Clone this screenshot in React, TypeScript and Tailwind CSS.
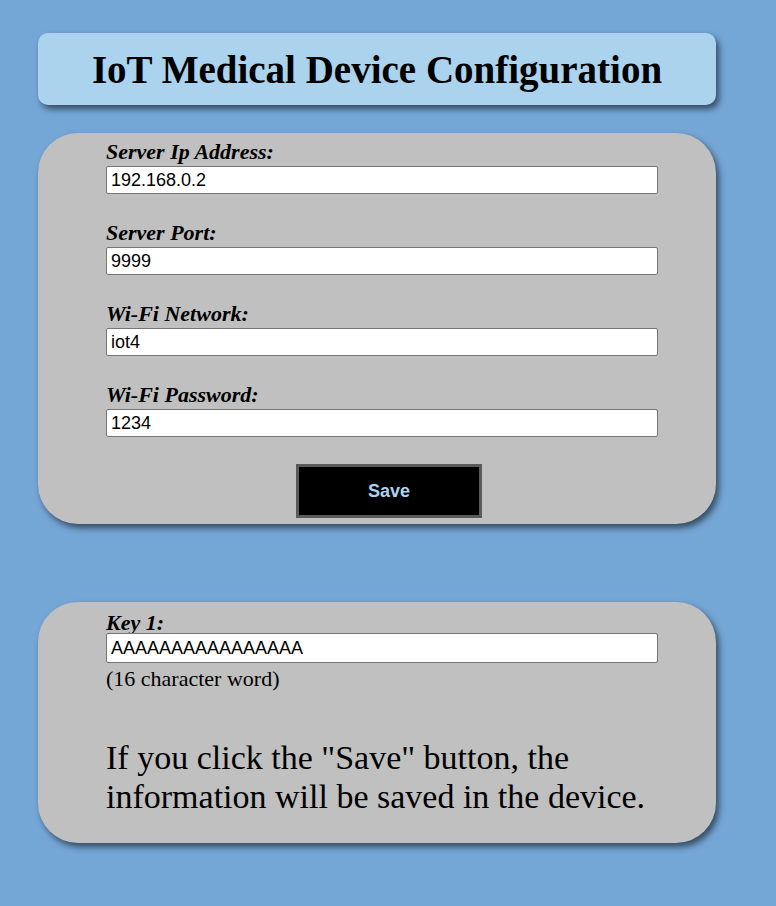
import { FC } from "react";

const fields = [
  { label: "Server Ip Address:", value: "192.168.0.2" },
  { label: "Server Port:", value: "9999" },
  { label: "Wi-Fi Network:", value: "iot4" },
  { label: "Wi-Fi Password:", value: "1234" },
];

const Field: FC<{ label: string; value: string; tall?: boolean }> = ({ label, value, tall }) => {
  return (
    <div className="flex flex-col">
      <label className={(tall ? "-mb-[2px] " : "mb-[2px] ") + "text-[22px] leading-[25px] font-bold italic"}>
        {label}
      </label>
      <input
        defaultValue={value}
        className={
          (tall ? "h-[30px] " : "h-[28px] ") +
          "w-[552px] bg-white border border-[#767676] rounded-[2px] px-[4px] text-[18px] font-[family-name:'Liberation_Sans',Arial,sans-serif] text-black outline-none"
        }
      />
    </div>
  );
};

const App: FC = () => {
  return (
    <main className="min-h-[906px] bg-[#74a6d6] pt-[33px] pb-[60px] font-[family-name:'Liberation_Serif','Times_New_Roman',serif] text-black">
      <div className="ml-[38px] w-[678px] flex flex-col">
        <header className="h-[72px] flex items-center justify-center rounded-[10px] bg-[#abd3ee] shadow-[3px_4px_6px_rgba(0,0,0,0.55)]">
          <h1 className="text-[39px] font-bold leading-none">IoT Medical Device Configuration</h1>
        </header>

        <section className="mt-[28px] rounded-[40px] bg-[#c0c0c0] shadow-[3px_4px_6px_rgba(0,0,0,0.55)] pt-[6px] pb-[6px] pl-[68px]">
          <div className="flex flex-col gap-[26px]">
            {fields.map((f) => (
              <Field key={f.label} label={f.label} value={f.value} />
            ))}
          </div>
          <div className="mt-[27px] ml-[190px]">
            <button className="w-[186px] h-[54px] bg-black border-[3px] border-[#5a5a5a] text-[#a9d4f0] text-[18px] font-bold font-[family-name:'Liberation_Sans',Arial,sans-serif]">
              Save
            </button>
          </div>
        </section>

        <section className="mt-[78px] h-[241px] rounded-[40px] bg-[#c0c0c0] shadow-[3px_4px_6px_rgba(0,0,0,0.55)] pt-[8px] pl-[68px]">
          <Field label="Key 1:" value="AAAAAAAAAAAAAAAA" tall />
          <p className="text-[22px] leading-[25px] mt-[3px]">(16 character word)</p>
          <p className="mt-[47px] text-[34px] leading-[39px]">
            If you click the "Save" button, the
            <br />
            information will be saved in the device.
          </p>
        </section>
      </div>
    </main>
  );
};

export default App;
